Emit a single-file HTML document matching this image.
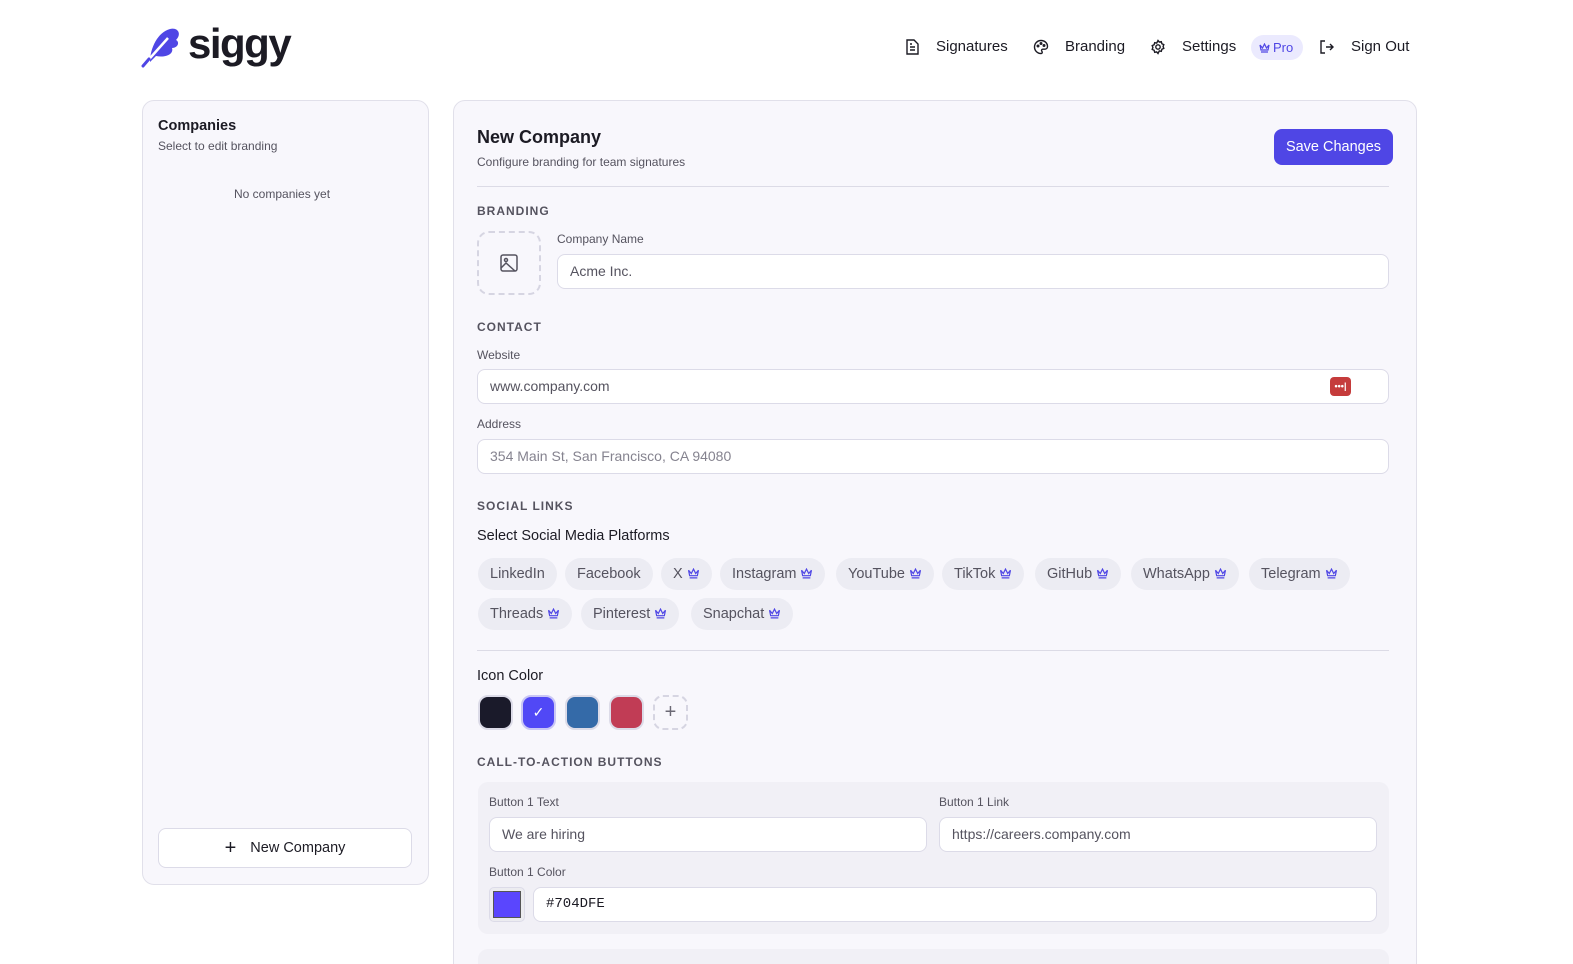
<!DOCTYPE html>
<html style="width:1573px;height:964px;overflow:hidden"><head><meta charset="utf-8"><style>
*{box-sizing:border-box;margin:0;padding:0}
body{width:1573px;height:964px;overflow:hidden;background:#fff;font-family:"Liberation Sans",sans-serif;color:#1c1b24;position:relative}
.abs{position:absolute}
.panel{position:absolute;background:#f8f7fc;border:1px solid #e1e0ea;border-radius:12px}
.nav{position:absolute;top:38px;font-size:15px;color:#1c1b24;display:flex;align-items:center;gap:14px}
.lbl{position:absolute;font-size:12px;color:#55535f}
.sec{position:absolute;font-size:12px;letter-spacing:1px;color:#55535f;font-weight:bold}
.inp{position:absolute;background:#fff;border:1px solid #dcdbe8;border-radius:8px;height:35px;font-size:14px;color:#55535f;padding-left:12px;line-height:33px}
.chip{position:absolute;height:32px;border-radius:16px;background:#ececf3;font-size:14.5px;color:#55535f;line-height:32px;padding:0 12px;white-space:nowrap}
.cr{display:inline-block;vertical-align:-1px;margin-left:4px}
.sw{position:absolute;top:695px;width:35px;height:35px;border-radius:10px;border:2px solid #dcdbe8}
</style></head><body>
<svg class="abs" style="left:140px;top:26px" width="42" height="42" viewBox="0 0 42 42"><path d="M10 36 C10 22 18 6 30 3 C38 1 42 8 36 14 C40 16 38 22 32 22 C34 28 26 32 16 30 Z" fill="#4f46e5"/><path d="M3 40 L28 12" stroke="#fff" stroke-width="2.5"/><path d="M3 40 L9 33" stroke="#4f46e5" stroke-width="3" stroke-linecap="round"/></svg>
<div class="abs" style="left:188px;top:20px;font-size:42px;font-weight:bold;color:#1c1b24;letter-spacing:-1.5px">siggy</div>

<div class="nav" style="left:905px"><svg width="15" height="16" viewBox="0 0 15 16" fill="none" stroke="#1c1b24" stroke-width="1.4"><path d="M2 1h7l4 4v10H2z"/><path d="M5 8h5M5 11h5M5 5h2"/></svg><span style="margin-left:2px">Signatures</span></div>
<div class="nav" style="left:1033px"><svg width="16" height="16" viewBox="0 0 16 16" fill="none" stroke="#1c1b24" stroke-width="1.4"><path d="M8 1.5a6.5 6.5 0 1 0 0 13c1.5 0 1.5-1.5.8-2.3-.7-.9 0-2 1-2h2a2.7 2.7 0 0 0 2.7-2.7C14.5 4 11.6 1.5 8 1.5z"/><circle cx="5" cy="7" r=".8"/><circle cx="8" cy="4.5" r=".8"/><circle cx="11" cy="6.5" r=".8"/></svg><span style="margin-left:2px">Branding</span></div>
<div class="nav" style="left:1150px"><svg width="16" height="16" viewBox="0 0 16 16" fill="none" stroke="#1c1b24" stroke-width="1.4"><circle cx="8" cy="8" r="2.2"/><path d="M8 1.5l1.3 1.6 2-.4.6 2 1.9.9-.7 1.9.7 1.9-1.9.9-.6 2-2-.4L8 14.5l-1.3-1.6-2 .4-.6-2-1.9-.9.7-1.9-.7-1.9 1.9-.9.6-2 2 .4z"/></svg><span style="margin-left:2px">Settings</span></div>
<div class="abs" style="left:1251px;top:35px;width:52px;height:25px;border-radius:13px;background:#ebeafe;color:#4f46e5;font-size:13px;line-height:25px;padding-left:8px"><svg class="cr" style="margin:0 3px 0 0" width="11" height="10" viewBox="0 0 11 10" fill="none" stroke="#4f46e5" stroke-width="1.2"><path d="M1 2l2.5 3L5.5 1l2 4L10 2 9 7H2z M2 9h7"/></svg>Pro</div>
<div class="nav" style="left:1319px"><svg width="16" height="16" viewBox="0 0 16 16" fill="none" stroke="#1c1b24" stroke-width="1.4"><path d="M6 2H2v12h4M7 8h7M11 5l3 3-3 3"/></svg><span style="margin-left:2px">Sign Out</span></div>

<div class="panel" style="left:142px;top:100px;width:287px;height:785px"></div>
<div class="abs" style="left:158px;top:118px;font-size:14.5px;font-weight:bold">Companies</div>
<div class="lbl" style="left:158px;top:139px">Select to edit branding</div>
<div class="lbl" style="left:234px;top:187px">No companies yet</div>
<div class="abs" style="left:158px;top:828px;width:254px;height:40px;background:#fff;border:1px solid #dcdbe8;border-radius:8px;font-size:14.5px;line-height:38px;text-align:center"><span style="font-size:20px;vertical-align:-2px;margin-right:14px;font-weight:300">+</span>New Company</div>

<div class="panel" style="left:453px;top:100px;width:964px;height:900px"></div>
<div class="abs" style="left:477px;top:127px;font-size:18px;font-weight:600">New Company</div>
<div class="lbl" style="left:477px;top:155px">Configure branding for team signatures</div>
<div class="abs" style="left:1274px;top:129px;width:119px;height:36px;background:#4f46e5;border-radius:8px;color:#fff;font-size:14.5px;line-height:36px;text-align:center">Save Changes</div>
<div class="abs" style="left:477px;top:186px;width:912px;height:1px;background:#dcdbe6"></div>

<div class="sec" style="left:477px;top:204px">BRANDING</div>
<div class="abs" style="left:477px;top:231px;width:64px;height:64px;border:2px dashed #d6d5e2;border-radius:12px"></div>
<svg class="abs" style="left:500px;top:254px" width="18" height="18" viewBox="0 0 18 18" fill="none" stroke="#55535f" stroke-width="1.5"><rect x="1" y="1" width="16" height="16" rx="2"/><circle cx="6" cy="6" r="1.5"/><path d="M1 14l5-5 9 8"/></svg>
<div class="lbl" style="left:557px;top:232px">Company Name</div>
<div class="inp" style="left:557px;top:254px;width:832px">Acme Inc.</div>

<div class="sec" style="left:477px;top:320px">CONTACT</div>
<div class="lbl" style="left:477px;top:348px">Website</div>
<div class="inp" style="left:477px;top:369px;width:912px">www.company.com</div>
<div class="abs" style="left:1330px;top:377px;width:21px;height:19px;background:#c53b3b;border-radius:4px;color:#fff;font-size:9px;line-height:18px;text-align:center;font-weight:bold">•••|</div>
<div class="lbl" style="left:477px;top:417px">Address</div>
<div class="inp" style="left:477px;top:439px;width:912px;color:#85838f">354 Main St, San Francisco, CA 94080</div>

<div class="sec" style="left:477px;top:499px">SOCIAL LINKS</div>
<div class="abs" style="left:477px;top:528px;font-size:14.5px">Select Social Media Platforms</div>

<div class="chip" style="left:478px;top:558px">LinkedIn</div>
<div class="chip" style="left:565px;top:558px">Facebook</div>
<div class="chip" style="left:661px;top:558px">X<svg class="cr" width="13" height="11" viewBox="0 0 11 10" fill="none" stroke="#4f46e5" stroke-width="1.1"><path d="M1 2l2.5 3L5.5 1l2 4L10 2 9 7H2z M2 9h7"/></svg></div>
<div class="chip" style="left:720px;top:558px">Instagram<svg class="cr" width="13" height="11" viewBox="0 0 11 10" fill="none" stroke="#4f46e5" stroke-width="1.1"><path d="M1 2l2.5 3L5.5 1l2 4L10 2 9 7H2z M2 9h7"/></svg></div>
<div class="chip" style="left:836px;top:558px">YouTube<svg class="cr" width="13" height="11" viewBox="0 0 11 10" fill="none" stroke="#4f46e5" stroke-width="1.1"><path d="M1 2l2.5 3L5.5 1l2 4L10 2 9 7H2z M2 9h7"/></svg></div>
<div class="chip" style="left:942px;top:558px">TikTok<svg class="cr" width="13" height="11" viewBox="0 0 11 10" fill="none" stroke="#4f46e5" stroke-width="1.1"><path d="M1 2l2.5 3L5.5 1l2 4L10 2 9 7H2z M2 9h7"/></svg></div>
<div class="chip" style="left:1035px;top:558px">GitHub<svg class="cr" width="13" height="11" viewBox="0 0 11 10" fill="none" stroke="#4f46e5" stroke-width="1.1"><path d="M1 2l2.5 3L5.5 1l2 4L10 2 9 7H2z M2 9h7"/></svg></div>
<div class="chip" style="left:1131px;top:558px">WhatsApp<svg class="cr" width="13" height="11" viewBox="0 0 11 10" fill="none" stroke="#4f46e5" stroke-width="1.1"><path d="M1 2l2.5 3L5.5 1l2 4L10 2 9 7H2z M2 9h7"/></svg></div>
<div class="chip" style="left:1249px;top:558px">Telegram<svg class="cr" width="13" height="11" viewBox="0 0 11 10" fill="none" stroke="#4f46e5" stroke-width="1.1"><path d="M1 2l2.5 3L5.5 1l2 4L10 2 9 7H2z M2 9h7"/></svg></div>
<div class="chip" style="left:478px;top:598px">Threads<svg class="cr" width="13" height="11" viewBox="0 0 11 10" fill="none" stroke="#4f46e5" stroke-width="1.1"><path d="M1 2l2.5 3L5.5 1l2 4L10 2 9 7H2z M2 9h7"/></svg></div>
<div class="chip" style="left:581px;top:598px">Pinterest<svg class="cr" width="13" height="11" viewBox="0 0 11 10" fill="none" stroke="#4f46e5" stroke-width="1.1"><path d="M1 2l2.5 3L5.5 1l2 4L10 2 9 7H2z M2 9h7"/></svg></div>
<div class="chip" style="left:691px;top:598px">Snapchat<svg class="cr" width="13" height="11" viewBox="0 0 11 10" fill="none" stroke="#4f46e5" stroke-width="1.1"><path d="M1 2l2.5 3L5.5 1l2 4L10 2 9 7H2z M2 9h7"/></svg></div>

<div class="abs" style="left:477px;top:650px;width:912px;height:1px;background:#dcdbe6"></div>
<div class="abs" style="left:477px;top:668px;font-size:14.5px">Icon Color</div>
<div class="sw" style="left:478px;background:#1a1a2a"></div>
<div class="sw" style="left:521px;background:#5148f6;border-color:#c9c6f5;color:#fff;text-align:center;line-height:30px;font-size:14px">✓</div>
<div class="sw" style="left:565px;background:#346aa8"></div>
<div class="sw" style="left:609px;background:#c13c55"></div>
<div class="sw" style="left:653px;background:transparent;border:2px dashed #d6d5e2;text-align:center;line-height:30px;font-size:20px;color:#6b6975;font-weight:300">+</div>

<div class="sec" style="left:477px;top:755px">CALL-TO-ACTION BUTTONS</div>
<div class="abs" style="left:478px;top:782px;width:911px;height:152px;background:#f1f0f6;border-radius:10px"></div>
<div class="lbl" style="left:489px;top:795px">Button 1 Text</div>
<div class="inp" style="left:489px;top:817px;width:438px">We are hiring</div>
<div class="lbl" style="left:939px;top:795px">Button 1 Link</div>
<div class="inp" style="left:939px;top:817px;width:438px">https://careers.company.com</div>
<div class="lbl" style="left:489px;top:865px">Button 1 Color</div>
<div class="abs" style="left:489px;top:887px;width:36px;height:35px;background:#ececf0;border:1px solid #dcdbe8;border-radius:5px"><div style="margin:3px;width:28px;height:27px;background:#5a46fe;border:1px solid #555"></div></div>
<div class="inp" style="left:533px;top:887px;width:844px;font-family:'Liberation Mono',monospace;color:#1c1b24">#704DFE</div>
<div class="abs" style="left:478px;top:949px;width:911px;height:15px;background:#f1f0f6;border-radius:10px 10px 0 0"></div>
</body></html>
